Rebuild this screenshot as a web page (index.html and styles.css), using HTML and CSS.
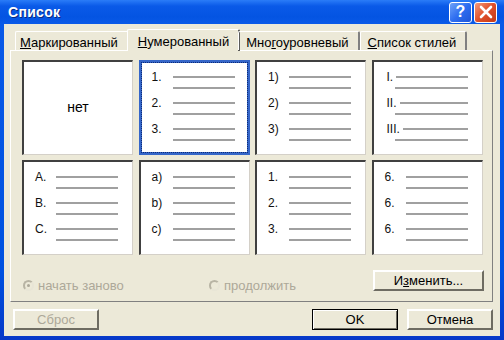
FILE: index.html
```html
<!DOCTYPE html>
<html>
  <head>
    <meta charset="UTF-8">
    <title>Список</title>
    <link rel="stylesheet" href="styles.css">
  </head>
  <body>
    <div class="window">
      <div class="titlebar">
        <span class="title">Список</span>
        <div class="title-buttons">
          <span class="tbtn help">?</span>
          <span class="tbtn close">
            <svg width="14" height="14" viewBox="0 0 14 14"><path d="M2 2 L12 12 M12 2 L2 12" stroke="#fff" stroke-width="2.6" stroke-linecap="round"/></svg>
          </span>
        </div>
      </div>

      <div class="client">
        <div class="tabs">
          <div class="tab"><u>М</u>аркированный</div>
          <div class="tab active"><u>Н</u>умерованный</div>
          <div class="tab">Мно<u>г</u>оуровневый</div>
          <div class="tab"><u>С</u>писок стилей</div>
        </div>

        <div class="panel">
          <div class="grid">
            <div class="preview none">нет</div>

            <div class="preview selected">
              <div class="item"><div class="row"><span class="lbl">1.</span><i class="line"></i></div><div class="row"><i class="line"></i></div></div>
              <div class="item"><div class="row"><span class="lbl">2.</span><i class="line"></i></div><div class="row"><i class="line"></i></div></div>
              <div class="item"><div class="row"><span class="lbl">3.</span><i class="line"></i></div><div class="row"><i class="line"></i></div></div>
            </div>

            <div class="preview">
              <div class="item"><div class="row"><span class="lbl">1)</span><i class="line"></i></div><div class="row"><i class="line"></i></div></div>
              <div class="item"><div class="row"><span class="lbl">2)</span><i class="line"></i></div><div class="row"><i class="line"></i></div></div>
              <div class="item"><div class="row"><span class="lbl">3)</span><i class="line"></i></div><div class="row"><i class="line"></i></div></div>
            </div>

            <div class="preview roman">
              <div class="item"><div class="row"><span class="lbl">I.</span><i class="line"></i></div><div class="row"><i class="line"></i></div></div>
              <div class="item"><div class="row"><span class="lbl">II.</span><i class="line"></i></div><div class="row"><i class="line"></i></div></div>
              <div class="item"><div class="row"><span class="lbl">III.</span><i class="line"></i></div><div class="row"><i class="line"></i></div></div>
            </div>

            <div class="preview">
              <div class="item"><div class="row"><span class="lbl">A.</span><i class="line"></i></div><div class="row"><i class="line"></i></div></div>
              <div class="item"><div class="row"><span class="lbl">B.</span><i class="line"></i></div><div class="row"><i class="line"></i></div></div>
              <div class="item"><div class="row"><span class="lbl">C.</span><i class="line"></i></div><div class="row"><i class="line"></i></div></div>
            </div>

            <div class="preview">
              <div class="item"><div class="row"><span class="lbl">a)</span><i class="line"></i></div><div class="row"><i class="line"></i></div></div>
              <div class="item"><div class="row"><span class="lbl">b)</span><i class="line"></i></div><div class="row"><i class="line"></i></div></div>
              <div class="item"><div class="row"><span class="lbl">c)</span><i class="line"></i></div><div class="row"><i class="line"></i></div></div>
            </div>

            <div class="preview">
              <div class="item"><div class="row"><span class="lbl">1.</span><i class="line"></i></div><div class="row"><i class="line"></i></div></div>
              <div class="item"><div class="row"><span class="lbl">2.</span><i class="line"></i></div><div class="row"><i class="line"></i></div></div>
              <div class="item"><div class="row"><span class="lbl">3.</span><i class="line"></i></div><div class="row"><i class="line"></i></div></div>
            </div>

            <div class="preview">
              <div class="item"><div class="row"><span class="lbl">6.</span><i class="line"></i></div><div class="row"><i class="line"></i></div></div>
              <div class="item"><div class="row"><span class="lbl">6.</span><i class="line"></i></div><div class="row"><i class="line"></i></div></div>
              <div class="item"><div class="row"><span class="lbl">6.</span><i class="line"></i></div><div class="row"><i class="line"></i></div></div>
            </div>
          </div>

          <div class="options">
            <label class="radio disabled first"><span class="dot checked"></span>начать заново</label>
            <label class="radio disabled"><span class="dot"></span>продолжить</label>
            <button class="btn change" type="button">И<u>з</u>менить...</button>
          </div>
        </div>

        <div class="footer">
          <button class="btn" type="button" disabled>Сброс</button>
          <div class="spacer"></div>
          <button class="btn default" type="button">OK</button>
          <button class="btn" type="button">Отмена</button>
        </div>
      </div>
    </div>
  </body>
</html>
```

FILE: styles.css
```css
body {
  margin: 0;
  font-family: "Liberation Sans", Arial, sans-serif;
  font-size: 13px;
  background-color: #0a52e0;
}
.window {
  width: 504px;
  height: 340px;
  box-sizing: border-box;
  padding: 0 4px 4px;
  display: flex;
  flex-direction: column;
  background: linear-gradient(#0a5ae8, #0052e0 80%, #0638c8);
}
.titlebar {
  height: 27px;
  display: flex;
  align-items: center;
  padding: 0 7px 0 4px;
  margin: 0 -4px;
  background: linear-gradient(#2a7cf8, #0a5ae8 25%, #0454e2 70%, #0a5ae8);
}
.title {
  color: #ffffff;
  font-weight: bold;
  font-size: 14px;
  padding-left: 4px;
  letter-spacing: 0.3px;
  text-shadow: 1px 1px #0a2a80;
  flex: 1;
}
.title-buttons {
  display: flex;
  gap: 2px;
}
.tbtn {
  width: 23px;
  height: 21px;
  box-sizing: border-box;
  border: 1px solid #ffffff;
  border-radius: 3px;
  display: flex;
  align-items: center;
  justify-content: center;
  color: #ffffff;
  font-weight: bold;
  font-size: 16px;
}
.help {
  background: linear-gradient(135deg, #6ea2f8, #2e6ef0 50%, #1f56d8);
}
.close {
  background: linear-gradient(135deg, #f29a7c, #e0502a 50%, #c43a18);
}
.client {
  flex: 1;
  background-color: #ece9d8;
  padding: 5px 7px 6px 6px;
  display: flex;
  flex-direction: column;
}
.tabs {
  display: flex;
  align-items: flex-end;
  height: 21px;
  padding-left: 5px;
  position: relative;
  z-index: 1;
}
.tab {
  height: 19px;
  box-sizing: border-box;
  padding: 3px 9px 0 7px;
  border: 1px solid #ffffff;
  border-right: 2px solid #808080;
  border-bottom: none;
  border-radius: 2px 2px 0 0;
  white-space: nowrap;
}
.tab:first-child {
  padding-left: 4px;
}
.tab.active {
  height: 22px;
  margin: 0 -2px -1px;
  padding: 4px 9px 0 10px;
  background-color: #ece9d8;
  border-right-color: #5a5a5a;
}
.panel {
  flex: 1;
  border: 1px solid #ffffff;
  border-right: 1px solid #808080;
  border-bottom: 1px solid #808080;
  padding: 9px 9px 8px 11px;
  display: flex;
  flex-direction: column;
}
.grid {
  display: grid;
  grid-template-columns: repeat(4, 111px);
  grid-template-rows: repeat(2, 95px);
  column-gap: 5.5px;
  row-gap: 5px;
}
.preview {
  background-color: #ffffff;
  border-top: 2px solid #404040;
  border-left: 2px solid #404040;
  border-right: 1px solid #d4d0c8;
  border-bottom: 1px solid #d4d0c8;
  padding: 9px 0 0 11px;
  box-sizing: border-box;
}
.preview.none {
  display: flex;
  align-items: center;
  justify-content: center;
  padding: 0 0 2px;
  font-size: 14px;
}
.preview.selected {
  border: 3px solid #3566c8;
  outline: 1px dotted #0c2b78;
  outline-offset: -3px;
  padding: 8px 0 0 10px;
}
.item {
  margin-bottom: 4px;
}
.row {
  height: 11px;
  display: flex;
  align-items: center;
  width: 83px;
}
.lbl {
  width: 21px;
  font-size: 12px;
  color: #111111;
}
.line {
  display: block;
  height: 2px;
  background-color: #a0a0a0;
  flex: 1;
}
.row .line:first-child {
  margin-left: 21px;
}
.roman .row {
  padding-left: 2px;
  width: 81px;
}
.roman .lbl {
  width: auto;
  margin-right: 3px;
}
.roman .row .line:first-child {
  margin-left: 8px;
}
.options {
  flex: 1;
  display: flex;
  align-items: center;
  padding-top: 13px;
}
.radio {
  display: flex;
  align-items: center;
  gap: 4px;
  margin-top: 10px;
  color: #aca899;
}
.radio.first {
  margin-left: 1px;
  width: 186px;
}
.dot {
  width: 11px;
  height: 11px;
  box-sizing: border-box;
  border-radius: 50%;
  border: 2px solid #b8b4a4;
  border-bottom-color: #e8e5d6;
  border-right-color: #e8e5d6;
  display: flex;
  align-items: center;
  justify-content: center;
}
.dot.checked::after {
  content: "";
  width: 3px;
  height: 3px;
  border-radius: 50%;
  background-color: #aca899;
}
.btn {
  font-family: "Liberation Sans", Arial, sans-serif;
  font-size: 13px;
  color: #000000;
  height: 21px;
  background-color: #ece9d8;
  border: 2px solid;
  border-color: #ffffff #6e6c62 #6e6c62 #ffffff;
  padding: 0;
}
.change {
  width: 111px;
  flex-shrink: 0;
  margin-left: auto;
  margin-right: -1px;
}
.footer {
  display: flex;
  align-items: center;
  padding-top: 7px;
  gap: 9px;
}
.footer .btn {
  width: 86px;
}
.footer .btn:first-child {
  margin-left: 3px;
}
.btn:disabled {
  color: #aca899;
}
.btn.default {
  border: 1px solid #000000;
  box-shadow: inset 1px 1px #ffffff, inset -1px -1px #6e6c62;
}
.spacer {
  flex: 1;
}
```
